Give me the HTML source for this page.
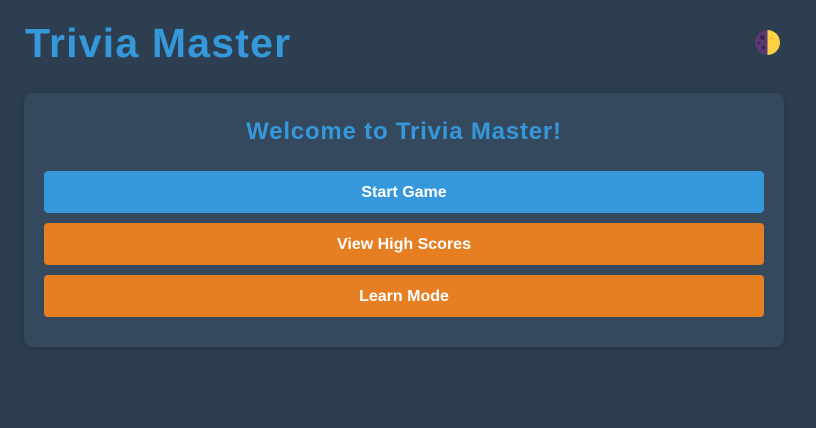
<!DOCTYPE html>
<html><head><style>
body{margin:0;width:816px;height:428px;background:#2c3e50;font-family:"Liberation Sans",sans-serif;position:relative;overflow:hidden}
h1{position:absolute;left:25px;top:20px;margin:0;font-size:41px;font-weight:bold;color:#3498db;letter-spacing:1.2px}
.card{position:absolute;left:24px;top:93px;width:760px;height:254px;background:#34495e;border-radius:8px;box-shadow:0 2px 8px rgba(0,0,0,.15)}
h2{margin:0;position:absolute;top:25px;width:100%;text-align:center;font-size:24px;font-weight:bold;color:#3498db;letter-spacing:0.8px}
.b{position:absolute;left:20px;width:720px;height:42px;border-radius:4px;color:#fff;font-weight:bold;font-size:16px;text-align:center;line-height:44px}
</style></head><body>
<h1>Trivia Master</h1>
<svg style="position:absolute;left:755px;top:30px" width="25" height="25" viewBox="0 0 24 24">
<path d="M12 0A12 12 0 0 0 12 24Z" fill="#5b3a73"/>
<path d="M12 0A12 12 0 0 1 12 24Z" fill="#fdd245"/>
<circle cx="7" cy="7" r="2.5" fill="#3e2650"/><circle cx="8" cy="17" r="2" fill="#3e2650"/><circle cx="3.5" cy="12.5" r="1.3" fill="#3e2650"/>
<circle cx="16" cy="8" r="2" fill="#f5c33b"/>
</svg>
<div class="card">
<h2>Welcome to Trivia Master!</h2>
<div class="b" style="top:78px;background:#3498db">Start Game</div>
<div class="b" style="top:130px;background:#e67e22">View High Scores</div>
<div class="b" style="top:182px;background:#e67e22">Learn Mode</div>
</div>
</body></html>
